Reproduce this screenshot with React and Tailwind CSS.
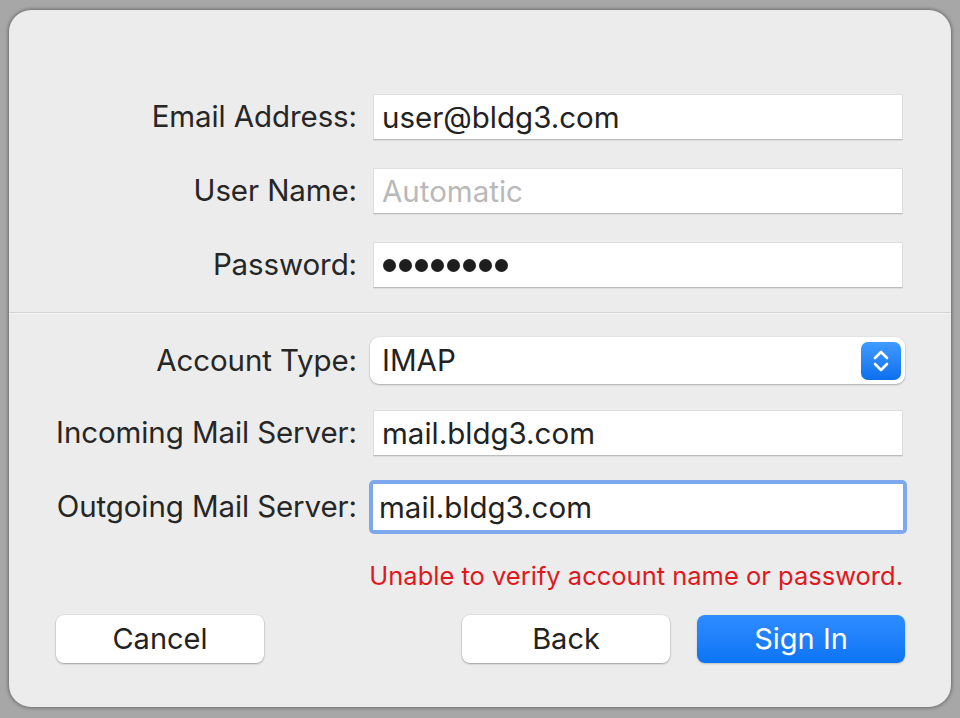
import React from 'react'

const font = { fontFamily: 'Inter, "Liberation Sans", sans-serif' }

function Label({ children }) {
  return (
    <div className="text-right text-[29.5px] text-[#262626] leading-none self-center pr-[1px] tracking-[-0.1px]">
      {children}
    </div>
  )
}

function Field({ children, focused }) {
  if (focused) {
    return (
      <div className="rounded-[5px] bg-[#7ea8ee] p-[4px] -m-[4px]">
        <div className="h-[46px] bg-white flex items-center px-[6px] text-[29.5px] text-[#222]">
          {children}
        </div>
      </div>
    )
  }
  return (
    <div className="h-[46px] bg-white flex items-center px-[8px] text-[29.5px] text-[#222] border border-[#dedede] border-b-[#bdbdbd] shadow-[0_1px_0_rgba(0,0,0,0.06)]">
      {children}
    </div>
  )
}

function Stepper() {
  return (
    <div className="w-[40px] h-[38px] rounded-[7px] bg-gradient-to-b from-[#3f9bff] to-[#0a6fef] flex items-center justify-center">
      <svg width="20" height="28" viewBox="0 0 20 28" fill="none" stroke="white" strokeWidth="2.6" strokeLinecap="round" strokeLinejoin="round">
        <path d="M4 11 L10 5 L16 11" />
        <path d="M4 17 L10 23 L16 17" />
      </svg>
    </div>
  )
}

function Button({ children, primary }) {
  return (
    <button
      className={
        primary
          ? 'w-[208px] h-[48px] rounded-[8px] bg-gradient-to-b from-[#2e8cff] to-[#0a74f5] text-white text-[29px] shadow-[0_1px_2px_rgba(0,0,0,0.2)]'
          : 'w-[208px] h-[48px] rounded-[8px] bg-white text-[#222] text-[29px] shadow-[0_1px_2px_rgba(0,0,0,0.3),0_0_0_0.5px_rgba(0,0,0,0.08)]'
      }
    >
      {children}
    </button>
  )
}

export default function App() {
  return (
    <div className="w-[960px] h-[718px] bg-[#a7a7a7] pt-[10px] pl-[9px] overflow-hidden" style={font}>
      <div className="w-[942px] h-[697px] bg-[#ececec] rounded-[22px] shadow-[0_0_4px_rgba(0,0,0,0.55)] pt-[84px] flex flex-col">
        <div className="grid grid-cols-[349px_530px] gap-x-[15px] gap-y-[28px]">
          <Label>Email Address:</Label>
          <Field>user@bldg3.com</Field>
          <Label>User Name:</Label>
          <Field>
            <span className="text-[#b9b9b9]">Automatic</span>
          </Field>
          <Label>Password:</Label>
          <Field>
            <div className="flex gap-[3px] pl-[1px]">
              {[0, 1, 2, 3, 4, 5, 6, 7].map(i => (
                <div key={i} className="w-[13px] h-[13px] rounded-full bg-[#1e1e1e]" />
              ))}
            </div>
          </Field>
        </div>

        <div className="mt-[24px] h-[2px] border-t border-[#d3d3d3] border-b border-b-[#f6f6f6]" />

        <div className="mt-[23px] grid grid-cols-[349px_535px] gap-x-[12px] gap-y-[26px]">
          <Label>Account Type:</Label>
          <div className="h-[47px] bg-white rounded-[9px] flex items-center justify-between pl-[12px] pr-[4px] text-[29.5px] text-[#222] shadow-[0_1px_2px_rgba(0,0,0,0.25),0_0_0_0.5px_rgba(0,0,0,0.06)]">
            <span>IMAP</span>
            <Stepper />
          </div>
        </div>

        <div className="mt-[26px] grid grid-cols-[349px_530px] gap-x-[15px] gap-y-[28px]">
          <Label>Incoming Mail Server:</Label>
          <Field>mail.bldg3.com</Field>
          <Label>Outgoing Mail Server:</Label>
          <Field focused>mail.bldg3.com</Field>
        </div>

        <div className="mt-[33px] pr-[48px] text-right text-[25.5px] text-[#e0181e] leading-none">
          Unable to verify account name or password.
        </div>

        <div className="mt-[26px] flex pl-[47px] pr-[46px]">
          <Button>Cancel</Button>
          <div className="flex-1" />
          <Button>Back</Button>
          <div className="w-[27px]" />
          <Button primary>Sign In</Button>
        </div>
      </div>
    </div>
  )
}
